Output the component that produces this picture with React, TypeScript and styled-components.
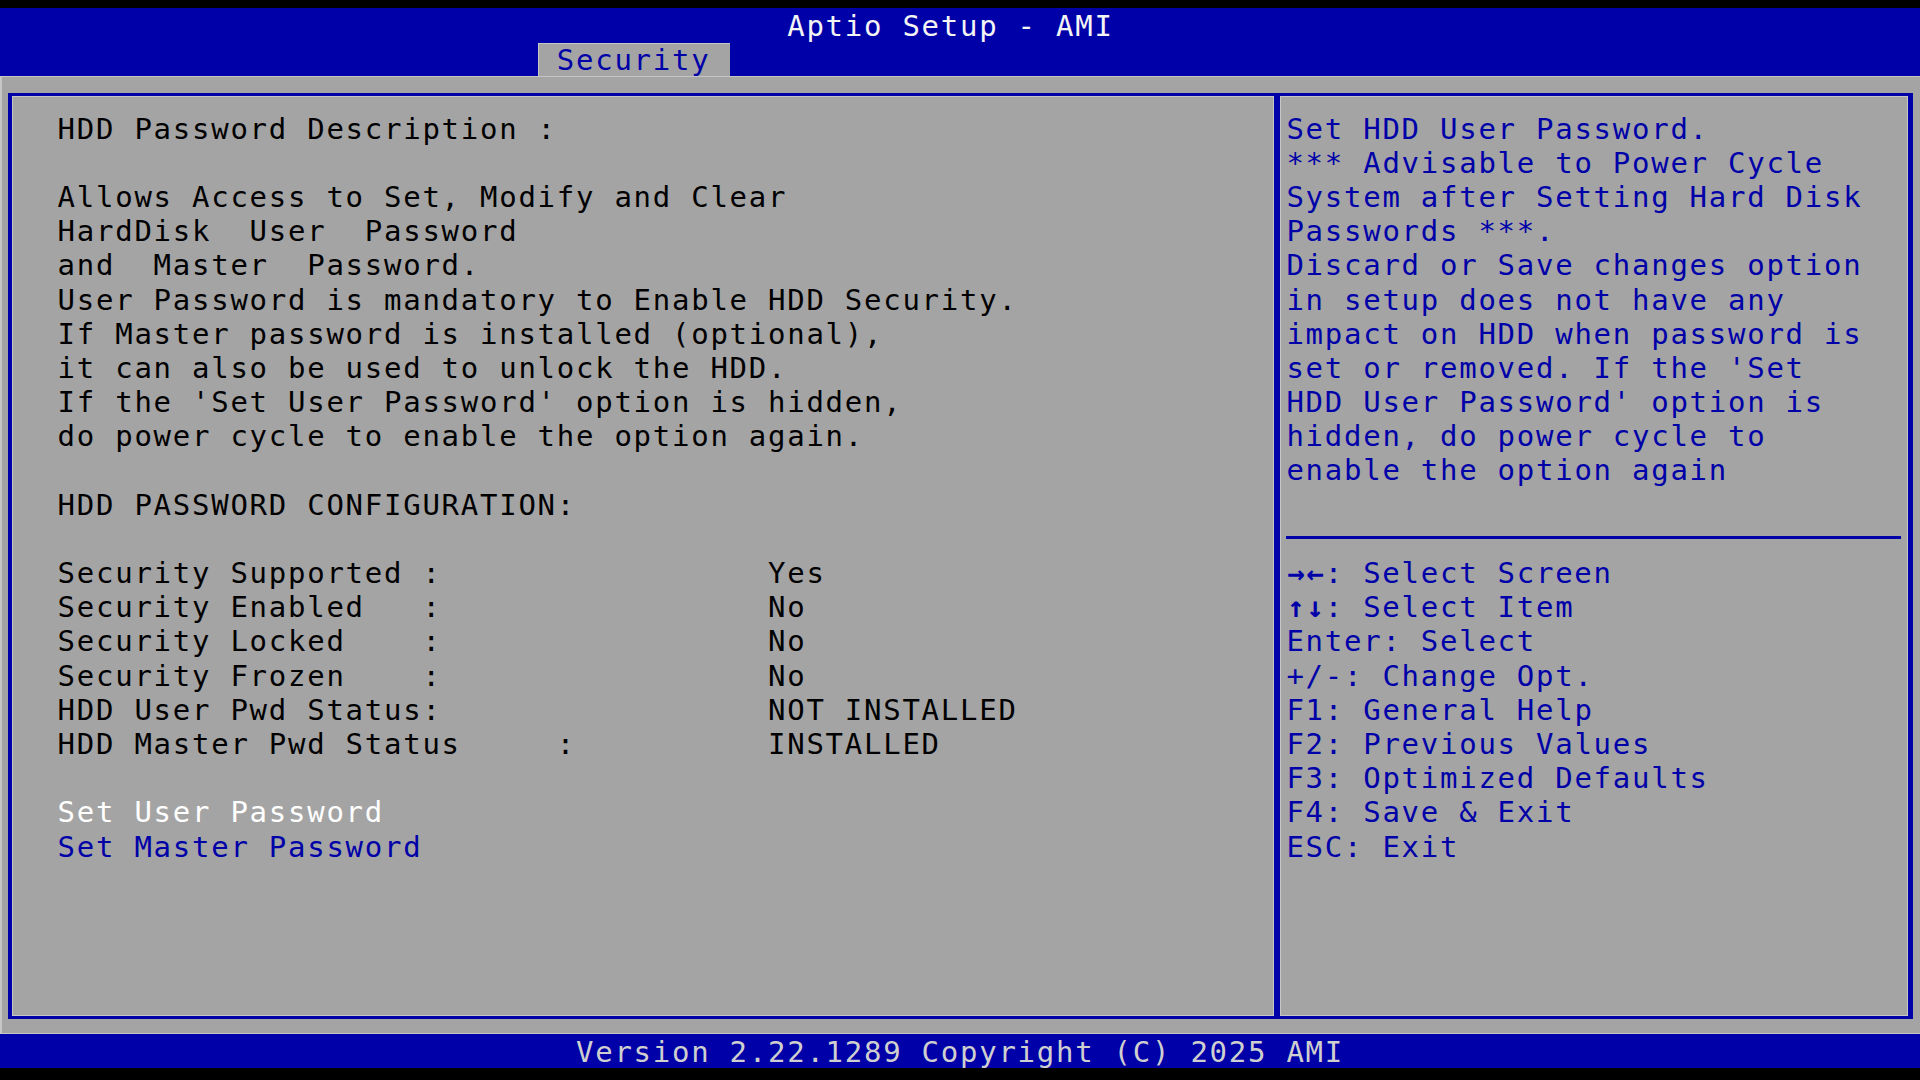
import React from "react";
import styled, { createGlobalStyle } from "styled-components";

const CW = 19.2; // character cell width
const RH = 34.2; // character cell height
const BLUE = "#0000a8";
const GRAY = "#a4a4a4";
const HALO = "#c6c6c6";

const GlobalStyle = createGlobalStyle`
  html, body {
    margin: 0;
    padding: 0;
    background: #000;
  }
  body {
    font-family: "DejaVu Sans Mono", "Liberation Mono", monospace;
  }
`;

const Screen = styled.div`
  width: 1920px;
  height: 1080px;
  box-sizing: border-box;
  padding-top: 8px;
  background: #000;
  display: flex;
  flex-direction: column;
  font-family: "DejaVu Sans Mono", "Liberation Mono", monospace;
  font-size: 29px;
  letter-spacing: ${CW - 29 * 0.60205}px;
  line-height: ${RH + 2.4}px;
  overflow: hidden;
`;

const Header = styled.header`
  background: ${BLUE};
  height: ${RH * 2}px;
  display: flex;
  flex-direction: column;
  flex: none;
`;

const TitleRow = styled.div`
  height: ${RH}px;
  padding-left: ${CW * 41}px;
  color: #f4f4f4;
  white-space: pre;
`;

const TabRow = styled.div`
  height: ${RH}px;
  padding-left: ${CW * 28}px;
  display: flex;
  align-items: flex-end;
`;

const Tab = styled.div`
  width: ${CW * 10}px;
  height: ${RH - 0.8}px;
  box-sizing: border-box;
  padding-left: ${CW}px;
  background: ${GRAY};
  color: ${BLUE};
  white-space: pre;
  line-height: ${RH + 1}px;
  box-shadow: inset 1px 1px 0 ${HALO};
`;

const Body = styled.main`
  flex: none;
  height: ${RH * 28}px;
  box-sizing: border-box;
  background: ${GRAY};
  padding: 16.6px 7px 15px 8px;
  display: flex;
  box-shadow: inset 2px 1px 0 ${HALO};
`;

const Frame = styled.div`
  flex: 1;
  display: grid;
  grid-template-columns: 1262px 6px 1fr;
  border-style: solid;
  border-color: ${BLUE};
  border-width: 3px 5px 3px 4px;
  box-shadow: inset 1px 1px 0 ${HALO}, inset -1px -1px 0 ${HALO};
`;

const LeftPanel = styled.section`
  padding: 14.6px 0 0 45.6px;
  display: flex;
  flex-direction: column;
`;

const Divider = styled.div`
  background: ${BLUE};
  box-shadow: -1px 0 0 ${HALO}, 1px 0 0 ${HALO};
`;

const RightPanel = styled.aside`
  padding: 14.6px 7.2px 0 6.4px;
  display: flex;
  flex-direction: column;
  color: ${BLUE};
`;

type Tone = "normal" | "selected" | "link";

const toneColor: Record<Tone, string> = {
  normal: "#000",
  selected: "#ffffff",
  link: BLUE,
};

const Line = styled.div<{ $tone?: Tone }>`
  height: ${RH}px;
  white-space: pre;
  color: ${(p) => (p.$tone ? toneColor[p.$tone] : "inherit")};
`;

const StatusRow = styled.div`
  height: ${RH}px;
  display: grid;
  grid-template-columns: ${CW * 37}px auto;
  white-space: pre;
  color: #000;
`;

const Rule = styled.div`
  height: ${RH}px;
  display: flex;
  align-items: center;
  &::after {
    content: "";
    flex: 1;
    height: 3px;
    background: ${BLUE};
  }
`;

const ArrowGlyph = styled.span`
  display: inline-block;
  width: ${CW}px;
  text-align: center;
  letter-spacing: 0;
  font-size: 29px;
  font-weight: bold;
  vertical-align: top;
`;

const Footer = styled.footer`
  flex: none;
  height: ${RH}px;
  background: ${BLUE};
  color: #cfcfcf;
  padding-left: ${CW * 30}px;
  white-space: pre;
  box-shadow: 0 -1px 0 ${HALO};
`;

const description: { t: string; tone?: Tone }[] = [
  { t: "HDD Password Description :" },
  { t: "" },
  { t: "Allows Access to Set, Modify and Clear" },
  { t: "HardDisk  User  Password" },
  { t: "and  Master  Password." },
  { t: "User Password is mandatory to Enable HDD Security." },
  { t: "If Master password is installed (optional)," },
  { t: "it can also be used to unlock the HDD." },
  { t: "If the 'Set User Password' option is hidden," },
  { t: "do power cycle to enable the option again." },
  { t: "" },
  { t: "HDD PASSWORD CONFIGURATION:" },
  { t: "" },
];

const status: [string, string][] = [
  ["Security Supported :", "Yes"],
  ["Security Enabled   :", "No"],
  ["Security Locked    :", "No"],
  ["Security Frozen    :", "No"],
  ["HDD User Pwd Status:", "NOT INSTALLED"],
  ["HDD Master Pwd Status     :", "INSTALLED"],
];

const help = [
  "Set HDD User Password.",
  "*** Advisable to Power Cycle",
  "System after Setting Hard Disk",
  "Passwords ***.",
  "Discard or Save changes option",
  "in setup does not have any",
  "impact on HDD when password is",
  "set or removed. If the 'Set",
  "HDD User Password' option is",
  "hidden, do power cycle to",
  "enable the option again",
];

const keys: { k: string; arrows?: string[]; d: string }[] = [
  { k: "lr", arrows: ["\u2192", "\u2190"], d: ": Select Screen" },
  { k: "ud", arrows: ["\u2191", "\u2193"], d: ": Select Item" },
  { k: "Enter", d: ": Select" },
  { k: "+/-", d: ": Change Opt." },
  { k: "F1", d: ": General Help" },
  { k: "F2", d: ": Previous Values" },
  { k: "F3", d: ": Optimized Defaults" },
  { k: "F4", d: ": Save & Exit" },
  { k: "ESC", d: ": Exit" },
];

export default function App() {
  return (
    <>
      <GlobalStyle />
      <Screen>
        <Header>
          <TitleRow>Aptio Setup - AMI</TitleRow>
          <TabRow>
            <Tab>Security</Tab>
          </TabRow>
        </Header>
        <Body>
          <Frame>
            <LeftPanel>
              {description.map((l, i) => (
                <Line key={i} $tone={l.tone ?? "normal"}>
                  {l.t}
                </Line>
              ))}
              {status.map(([label, value]) => (
                <StatusRow key={label}>
                  <span>{label}</span>
                  <span>{value}</span>
                </StatusRow>
              ))}
              <Line $tone="normal" />
              <Line $tone="selected">Set User Password</Line>
              <Line $tone="link">Set Master Password</Line>
            </LeftPanel>
            <Divider />
            <RightPanel>
              {help.map((h, i) => (
                <Line key={i}>{h}</Line>
              ))}
              <Line />
              <Rule />
              {keys.map((k) => (
                <Line key={k.k}>
                  {k.arrows
                    ? k.arrows.map((a) => <ArrowGlyph key={a}>{a}</ArrowGlyph>)
                    : k.k}
                  {k.d}
                </Line>
              ))}
            </RightPanel>
          </Frame>
        </Body>
        <Footer>Version 2.22.1289 Copyright (C) 2025 AMI</Footer>
      </Screen>
    </>
  );
}
